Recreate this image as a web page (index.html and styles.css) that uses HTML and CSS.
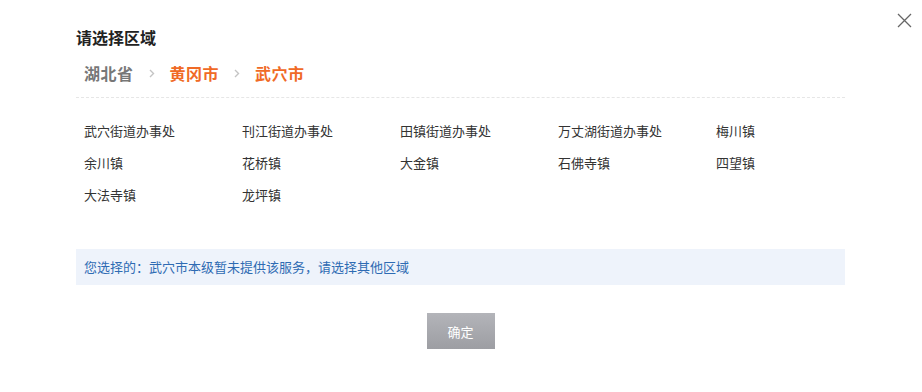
FILE: index.html
```html
<!DOCTYPE html>
<html lang="zh-CN">

<head>
    <meta charset="UTF-8">
    <title>请选择区域</title>
    <link rel="stylesheet" href="styles.css">
</head>

<body>
    <div class="dialog">
        <a class="close" href="#">
            <svg width="15" height="15" viewBox="0 0 15 15">
                <path d="M1 1L14 14M14 1L1 14" stroke="#666" stroke-width="1.3" fill="none" />
            </svg>
        </a>
        <h2 class="title">请选择区域</h2>
        <div class="crumbs">
            <span class="crumb">湖北省</span>
            <svg class="sep" width="6" height="9" viewBox="0 0 6 9">
                <path d="M1 1L4.5 4.5L1 8" stroke="#c4c4c4" stroke-width="1.4" fill="none" />
            </svg>
            <span class="crumb active">黄冈市</span>
            <svg class="sep" width="6" height="9" viewBox="0 0 6 9">
                <path d="M1 1L4.5 4.5L1 8" stroke="#c4c4c4" stroke-width="1.4" fill="none" />
            </svg>
            <span class="crumb active">武穴市</span>
        </div>
        <ul class="areas">
            <li>武穴街道办事处</li>
            <li>刊江街道办事处</li>
            <li>田镇街道办事处</li>
            <li>万丈湖街道办事处</li>
            <li>梅川镇</li>
            <li>余川镇</li>
            <li>花桥镇</li>
            <li>大金镇</li>
            <li>石佛寺镇</li>
            <li>四望镇</li>
            <li>大法寺镇</li>
            <li>龙坪镇</li>
        </ul>
        <div class="notice">您选择的：武穴市本级暂未提供该服务，请选择其他区域</div>
        <div class="actions">
            <button class="btn">确定</button>
        </div>
    </div>
</body>

</html>
```

FILE: styles.css
```css
body {
    margin: 0;
    font-family: "Noto Sans CJK SC", "Liberation Sans", sans-serif;
    color: #333;
    background: #fff;
}

.dialog {
    position: relative;
    width: 769px;
    padding: 26px 0 0 76px;
}

.close {
    position: absolute;
    top: 13px;
    left: 897px;
    display: block;
    line-height: 0;
}

.title {
    margin: 0;
    font-size: 16px;
    font-weight: bold;
    line-height: 22px;
    color: #222;
}

.crumbs {
    display: flex;
    align-items: center;
    padding: 10px 0 9px 8px;
    height: 30px;
    border-bottom: 1px dashed #e6e6e6;
}

.crumb {
    font-size: 16px;
    font-weight: bold;
    letter-spacing: 0.5px;
    color: #777;
}

.crumb.active {
    color: #f06a26;
}

.sep {
    margin: 0 15px;
}

.areas {
    list-style: none;
    display: grid;
    grid-template-columns: repeat(5, 158px);
    margin: 0;
    padding: 17px 0 0 8px;
    height: 110px;
    align-content: start;
}

.areas li {
    font-size: 13px;
    line-height: 32px;
    color: #333;
    cursor: pointer;
}

.notice {
    margin-top: 24px;
    height: 36px;
    line-height: 36px;
    padding-left: 8px;
    background: #eef3fb;
    font-size: 13px;
    color: #2e6bb3;
}

.actions {
    display: flex;
    justify-content: center;
    padding-top: 28px;
}

.btn {
    width: 68px;
    height: 36px;
    border: none;
    background: linear-gradient(#b3b4b9, #9d9ea3);
    color: #fff;
    font-family: inherit;
    font-size: 13px;
    cursor: pointer;
}
```
